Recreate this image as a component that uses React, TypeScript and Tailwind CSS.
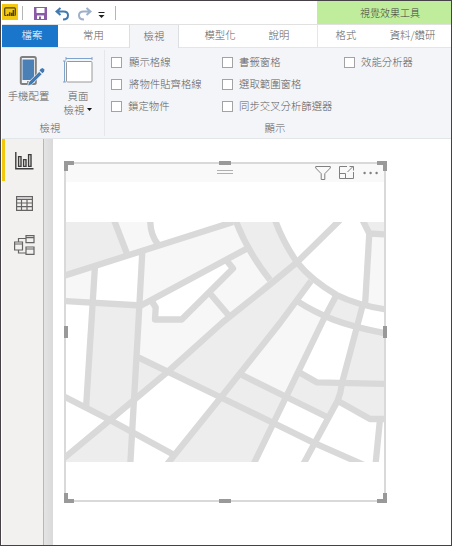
import React from 'react';

const white = [
  '150,222 158,243 233,222',
  '276,222 338,222 297,262',
  '338,222 363,222 369,233 365,305 337,295 313,281 297,262',
  '95,266 142,252 141,306 93,303',
  '66,301 93,303 86,408 66,397',
  '66,397 110,420 66,457',
  '110,420 134,400 132,432',
  '134,400 167,373 220,397 173,454 132,432',
  '132,432 173,454 168,463 130,463',
  '152,301 228,259 233,268 182,320 155,319',
  '298,302 313,281 335,298 323,315',
  '362,307 385,309 385,333 357,327',
  '323,315 357,327 342,383 317,382 300,372',
  '285,397 328,417 315,443 273,423',
  '273,423 315,443 304,463 254,463',
  '315,443 360,463 304,463',
  '338,400 370,419 385,419 385,463 360,463 315,443',
];

const light = [
  '114,222 150,222 158,243 127,253',
  '66,275 95,266 93,303 66,301',
  '142,252 233,222 237,222 249,249 141,305',
  '141,305 152,301 155,319 182,320 209,292 228,317 167,373 138,357',
  '209,292 233,268 228,261 252,250 270,279 228,317',
  '240,373 298,302 323,315 300,372 285,397',
  '369,233 385,234 385,309 365,305',
];

const roads = [
  'M60 277 L233 222',
  'M114 220 L126.7 253',
  'M150.3 220 Q150 234 157.7 244',
  'M95 266 L86 408',
  'M142.3 252 L138.3 325 L130.3 464',
  'M60 300.7 L141 305.5 L247 248.5',
  'M151.7 301 L155.7 307.5 L155 319.5 L181.7 319.5 L233 268.5 L227 261',
  'M209 292.3 L230 317',
  'M235.5 220 Q247 251 270 280',
  'M275 220 Q283 242 297 262.3 Q311 280 336.7 295 Q358 305.500 387 309.500',
  'M340 220 L297 262.3 L270 284.500 L223 322 L166.700 372.700 L110 420 L60 461.500',
  'M60 394.500 L110 420 L173.300 454.500',
  'M138.300 357.300 L222 398 L315 443.300 L364 465',
  'M166.700 464.700 L222 396 L280 323 L311 281',
  'M240 374 L327 417',
  'M253.300 464.700 L273.300 423.300 L323.300 320 L336 296',
  'M298 301.700 Q314 312 333 319.500 Q354 327.500 387 333.500',
  'M362.500 306 L342 383 Q341 393 337.500 401 L303 464.700',
  'M300 372.700 L316.700 382.300 L387 384',
  'M338 401 L370 419 L387 419',
  'M380 419 L375.500 465',
  'M362 219 L369.300 233.500 L387 234.500',
  'M369.300 233.500 L365 306',
];

function StreetMap() {
  return (
    <svg className="block h-[240px] w-[318px]" viewBox="66 222 318 240">
      <rect x="66" y="222" width="318" height="240" fill="#ededed" />
      {white.map((p) => <polygon key={p} points={p} fill="#fff" />)}
      {light.map((p) => <polygon key={p} points={p} fill="#f7f7f7" />)}
      {roads.map((d) => (
        <path key={d} d={d} fill="none" stroke="#d9d9d9" strokeWidth="6.3" strokeLinejoin="round" />
      ))}
    </svg>
  );
}

function Check({ label, wide = false }: { label: string; wide?: boolean }) {
  return (
    <label className={`flex h-[22px] items-center whitespace-nowrap ${wide ? 'gap-[7px]' : 'gap-[6px]'}`}>
      <span className="size-[11px] shrink-0 border border-[#a3a3a3] bg-white" />
      <span>{label}</span>
    </label>
  );
}

function TitleBar() {
  return (
    <div className="flex h-[23px] shrink-0">
      <div className="mt-[3px] flex h-4 w-4 items-center justify-center bg-[#f2c811]">
        <svg className="h-[10px] w-3" viewBox="0 0 12 10" fill="none" stroke="#4d420b">
          <path d="M2.500 8.500H1.500Q.7 8.500 .7 7.700V1.700Q.7 .8 1.500 .8H10.500Q11.300 .8 11.300 1.700V7.700Q11.300 8.500 10.500 8.500" strokeWidth="1.200" />
          <path d="M3.700 9V7M5.700 9V5.200M7.700 9V5.700M9.400 9V3" strokeWidth="1.500" />
        </svg>
      </div>
      <div className="mt-[5px] ml-1 h-[14px] w-px bg-[#b5b5b5]" />
      <svg className="mt-[6px] ml-[11px] h-[13px] w-[13px]" viewBox="0 0 13 13">
        <path d="M0 0H13V13H0Z" fill="#8b5ba8" />
        <path d="M2.500 1H10.500V6H2.500ZM3 8.500H10V12H3Z" fill="#fff" />
        <path d="M5 9.500H7V13H5Z" fill="#8b5ba8" />
      </svg>
      <svg className="mt-[6px] ml-2 h-[14px] w-[15px]" viewBox="0 0 15 14" fill="none" stroke="#4179b0" strokeWidth="2">
        <path d="M5.500 1L1.500 4.500L5.500 8M2 4.500H8.500Q13 4.500 13 8.300Q13 12.500 8 12.500" />
      </svg>
      <svg className="mt-[6px] ml-[7px] h-[14px] w-[15px]" viewBox="0 0 15 14" fill="none" stroke="#9db1ca" strokeWidth="2">
        <path d="M9.500 1L13.500 4.500L9.500 8M13 4.500H6.500Q2 4.500 2 8.300Q2 12.500 7 12.500" />
      </svg>
      <svg className="mt-[11px] ml-[6px] h-[6px] w-[7px]" viewBox="0 0 7 6">
        <path d="M.5 0H6.500V1H.5ZM.5 3H6.500L3.500 6Z" fill="#222" />
      </svg>
      <div className="mt-[5px] ml-[10px] h-[14px] w-px bg-[#b5b5b5]" />
      <div className="ml-auto flex w-[134px] items-center justify-center bg-[#c0ed9b] pb-px pl-3 text-[10px] text-[#404040]">視覺效果工具</div>
    </div>
  );
}

function Tabs() {
  const tab = 'flex items-center justify-center pb-[2px]';
  return (
    <div className="flex h-[23px] shrink-0 border-t border-[#e1e1e1] text-[#606060]">
      <div className={`${tab} w-[56px] bg-[#1976ca] pl-1 text-white`}>檔案</div>
      <div className={`${tab} w-[71px]`}>常用</div>
      <div className={`${tab} z-10 -mb-px w-[50px] border-x border-[#dcdfe2] bg-[#f4f5f8]`}>檢視</div>
      <div className={`${tab} w-[82px]`}>模型化</div>
      <div className={`${tab} w-[36px]`}>說明</div>
      <div className={`${tab} ml-[20px] w-[57px] border-l border-[#e6e6e6]`}>格式</div>
      <div className={`${tab} w-[77px] whitespace-nowrap`}>資料/鑽研</div>
    </div>
  );
}

function Ribbon() {
  return (
    <div className="flex h-[92px] shrink-0 border-y border-[#e3e6e9] bg-[#f4f5f8] text-[#5c5c5c]">
      <div className="my-[2px] flex w-[103px] flex-col border-r border-[#e6e7ea]">
        <div className="flex h-[70px] shrink-0">
          <div className="flex w-[53px] flex-col items-center pt-[5px]">
            <svg className="ml-[6px] h-8 w-[27px]" viewBox="0 0 27 32">
              <rect x="2.800" y="2" width="15" height="27" rx="1.500" fill="#f4f5f8" stroke="#808080" strokeWidth="2" />
              <rect x="4.500" y="4.500" width="11.500" height="20.500" fill="#4b80b7" />
              <circle cx="10" cy="27" r="1" fill="#777" />
              <path d="M9.500 31L10.800 27L21.200 16.500L24 19.300L13.500 29.800Z" fill="#4179b0" stroke="#f4f5f8" strokeWidth=".8" />
              <path d="M22.500 14L24.500 13L26.500 14.500L26 16.700L24.500 18.200L21.500 15.500Z" fill="#4179b0" />
            </svg>
            <span className="mt-px leading-[16px]">手機配置</span>
          </div>
          <div className="flex w-[46px] flex-col items-center pt-[7px]">
            <svg className="h-[27px] w-[30px]" viewBox="0 0 30 27" fill="none">
              <path d="M3 1.500H29M3 0V3M29 0V3M1.500 4V25M0 4H3M0 25H3" stroke="#7ea4cd" />
              <rect x="3.500" y="4.500" width="25.500" height="20.500" rx="1" fill="#fff" stroke="#999" />
            </svg>
            <span className="mt-[5px] leading-[14px]">頁面</span>
            <span className="flex items-center gap-[3px] leading-[13px]">檢視
              <svg className="h-[3px] w-[5px]" viewBox="0 0 5 3"><path d="M0 0H5L2.500 3Z" fill="#111" /></svg>
            </span>
          </div>
        </div>
        <div className="pr-[6px] text-center leading-[16px]">檢視</div>
      </div>
      <div className="flex grow flex-col">
        <div className="grid h-[71px] shrink-0 grid-cols-[111px_122px_1fr] content-start pt-[3px] pl-[6px]">
          <Check label="顯示格線" wide /><Check label="書籤窗格" /><Check label="效能分析器" />
          <Check label="將物件貼齊格線" wide /><Check label="選取範圍窗格" /><span />
          <Check label="鎖定物件" /><Check label="同步交叉分析篩選器" /><span />
        </div>
        <div className="pr-[6px] text-center leading-[18px]">顯示</div>
      </div>
    </div>
  );
}

function Sidebar() {
  return (
    <div className="flex w-[42px] shrink-0 border-r border-[#b8b8b8] bg-[#f2f1ef]">
      <div className="h-[42px] w-[3px] bg-[#f2c80f]" />
      <div className="flex w-[38px] flex-col items-center">
        <svg className="mt-[13px] h-[18px] w-[19px]" viewBox="0 0 19 18" fill="none" stroke="#3d3d3d" strokeWidth="1.400">
          <path d="M.8 0V16.800H18.500" />
          <path d="M3.600 4.600H6V14.400H3.600ZM8.600 7.600H11V14.400H8.600ZM13.600 2.600H16V14.400H13.600Z" />
        </svg>
        <svg className="mt-[26px] h-[15px] w-[17px]" viewBox="0 0 17 15" fill="none" stroke="#656565" strokeWidth="1.200">
          <path d="M.6 .6H16.400V14.400H.6ZM.6 3.400H16.400M.6 7H16.400M.6 10.700H16.400M5.500 3.400V14.400M11 3.400V14.400" />
        </svg>
        <svg className="mt-6 h-5 w-[21px]" viewBox="0 0 21 20" fill="none" stroke="#656565" strokeWidth="1.200">
          <path d="M.6 7H8.500V15H.6ZM.6 9H8.500M12 .6H20V7.600H12ZM12 2.600H20M12 12H20V19.400H12ZM12 14H20M12 3.500H4.500V7M4.500 15V18H12" />
        </svg>
      </div>
    </div>
  );
}

function Visual() {
  const grip = 'absolute bg-[#999]';
  return (
    <div className="relative mt-[23px] ml-[11px] h-[340px] w-[322px] border-2 border-[#d9d9d9] bg-white">
      <div className="flex h-[18px] items-start bg-[#f9f9f9]">
        <div className="mt-[6px] ml-[151px] h-1 w-4 border-y border-[#b0b0b0]" />
        <svg className="mt-px ml-[82px] h-4 w-4" viewBox="0 0 16 16" fill="none" stroke="#808080">
          <path d="M.7 1.500H15.300V3L9.800 8.700V14.500H6.200V8.700L.7 3Z" />
        </svg>
        <svg className="mt-[2px] ml-[8px] h-[13px] w-[15px]" viewBox="0 0 15 13" fill="none" stroke="#808080">
          <path d="M8 .5H.5V12.500H14.500V6M.5 7.500H6.500V12.500M8.500 6L14 .5M10.500 .5H14.500V4.500" />
        </svg>
        <svg className="mt-[7px] ml-[9px] h-1 w-4" viewBox="0 0 16 4" fill="#808080">
          <circle cx="1.600" cy="2" r="1.200" /><circle cx="7.600" cy="2" r="1.200" /><circle cx="13.600" cy="2" r="1.200" />
        </svg>
      </div>
      <div className="pt-[40px]"><StreetMap /></div>
      <span className={`${grip} -top-[3px] -left-[2px] h-1 w-[10px]`} />
      <span className={`${grip} -top-[3px] -left-[2px] h-[10px] w-1`} />
      <span className={`${grip} -top-[3px] -right-[3px] h-1 w-[10px]`} />
      <span className={`${grip} -top-[3px] -right-[3px] h-[10px] w-1`} />
      <span className={`${grip} -bottom-[3px] -left-[2px] h-1 w-[10px]`} />
      <span className={`${grip} -bottom-[3px] -left-[2px] h-[10px] w-1`} />
      <span className={`${grip} -right-[3px] -bottom-[3px] h-1 w-[10px]`} />
      <span className={`${grip} -right-[3px] -bottom-[3px] h-[10px] w-1`} />
      <span className={`${grip} -top-[3px] left-[153px] h-1 w-3`} />
      <span className={`${grip} -bottom-[3px] left-[153px] h-1 w-3`} />
      <span className={`${grip} top-[162px] -left-[2px] h-3 w-1`} />
      <span className={`${grip} top-[162px] -right-[3px] h-3 w-1`} />
    </div>
  );
}

export default function App() {
  return (
    <div className="flex h-[546px] w-[452px] flex-col overflow-hidden border border-[#454147] bg-white pl-px font-['Noto_Sans_CJK_TC',sans-serif] text-[10.4px] font-light">
      <TitleBar />
      <Tabs />
      <Ribbon />
      <div className="flex grow">
        <Sidebar />
        <div className="w-[9px] shrink-0 bg-linear-to-r from-[#e4e4e4] to-[#d9d9d9]" />
        <Visual />
      </div>
    </div>
  );
}
